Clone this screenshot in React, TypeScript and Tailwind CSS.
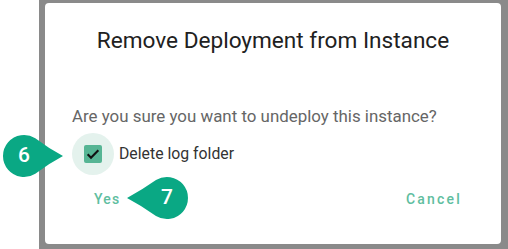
import React from "react";

function Callout({ n, side }: { n: string; side: "left" | "right" }) {
  const path =
    side === "left"
      ? "M35.3,4.3 A21,21 0 1,0 35.3,39.7 Q48,30 63,22 Q48,14 35.3,4.3 Z"
      : "M30,4.1 A21,21 0 1,1 30,39.9 Q16,30 1,22 Q16,14 30,4.1 Z";
  return (
    <div className="relative h-[44px] w-[64px]">
      <svg width="64" height="44" viewBox="0 0 64 44" className="absolute inset-0">
        <path d={path} fill="#0aa884" />
      </svg>
      <span
        className={`absolute top-0 flex h-[44px] w-[42px] items-center justify-center text-[21px] font-medium text-white ${
          side === "left" ? "left-[3px]" : "left-[20px]"
        }`}
      >
        {n}
      </span>
    </div>
  );
}

export default function App() {
  return (
    <div className="relative flex h-[249px] w-[508px] bg-white font-['Roboto',sans-serif]">
      <div className="w-[39px] shrink-0 bg-white" />
      <div className="flex flex-1 bg-[#8a8a8a] pb-[5px] pl-[6px] pr-[7px] pt-[3px]">
        <div className="flex flex-1 flex-col rounded-[4px] bg-white px-[27px] pb-[25px] pt-[24px]">
          <h2 className="text-center text-[22.6px] leading-[28px] text-[#212121]">
            Remove Deployment from Instance
          </h2>
          <p className="mt-[49px] text-[16.9px] leading-[24px] text-[#666666]">
            Are you sure you want to undeploy this instance?
          </p>
          <label className="mt-[5px] flex items-center">
            <span className="flex h-[42px] w-[42px] items-center justify-center rounded-full bg-[#e4f2ed]">
              <span className="flex h-[18px] w-[18px] items-center justify-center rounded-[2px] bg-[#56b594]">
                <svg width="16" height="16" viewBox="0 0 24 24" fill="none">
                  <path d="M4 12.5l5 5L20 6.5" stroke="#111" strokeWidth="3.2" />
                </svg>
              </span>
            </span>
            <span className="ml-[5px] text-[15.8px] text-[#333333]">Delete log folder</span>
          </label>
          <div className="mt-[6px] flex items-center justify-between pl-[6px]">
            <button className="h-[36px] px-[16px] text-[14px] font-medium tracking-[1.2px] text-[#5fbe9f]">
              Yes
            </button>
            <button className="-mr-[4px] h-[36px] px-[16px] text-[14px] font-medium tracking-[2.2px] text-[#5fbe9f]">
              Cancel
            </button>
          </div>
        </div>
      </div>
      <div className="absolute left-0 top-[134px]">
        <Callout n="6" side="left" />
      </div>
      <div className="absolute left-[126px] top-[176px]">
        <Callout n="7" side="right" />
      </div>
    </div>
  );
}
